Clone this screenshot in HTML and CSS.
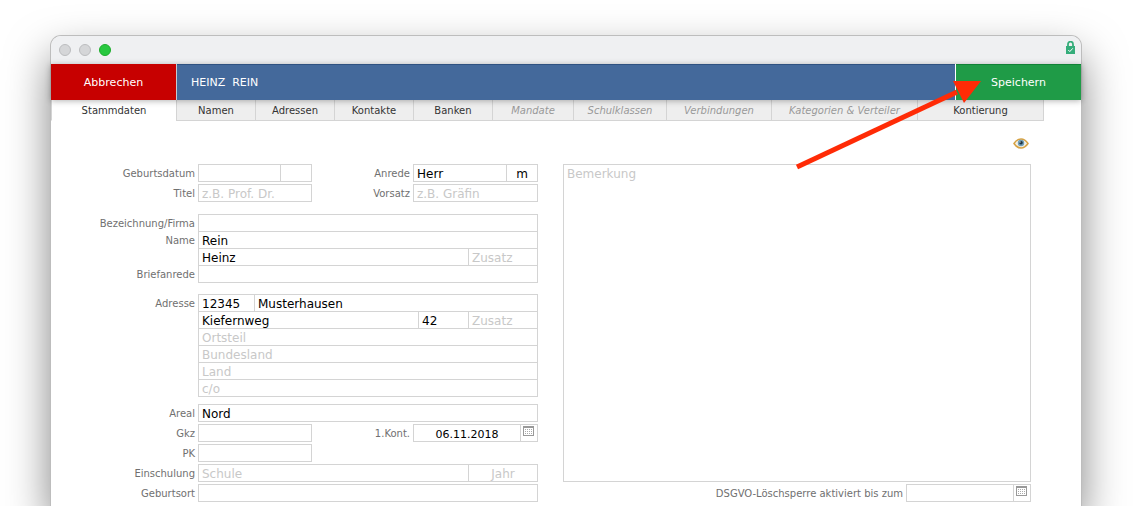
FILE: index.html
```html
<!DOCTYPE html>
<html lang="de">
<head>
<meta charset="utf-8">
<title>Heinz Rein</title>
<link rel="stylesheet" href="styles.css">
</head>
<body>
<svg class="defs" aria-hidden="true">
  <symbol id="calendar" viewBox="0 0 11 10">
    <path fill="#999" d="M0 0h11v2H0zM0 2h1v8H0zM10 2h1v8h-1zM1 9h9v1H1z"/>
    <path fill="#aaa" d="M2 3h1v1H2zM4 3h1v1H4zM6 3h1v1H6zM8 3h1v1H8zM2 5h1v1H2zM4 5h1v1H4zM6 5h1v1H6zM8 5h1v1H8zM2 7h1v1H2zM4 7h1v1H4zM6 7h1v1H6zM8 7h1v1H8z"/>
  </symbol>
</svg>
<main class="window">
  <header class="titlebar">
    <span class="light"></span><span class="light"></span><span class="light light-on"></span>
    <svg class="lock" viewBox="0 0 9 13" width="9" height="13" aria-hidden="true">
      <path d="M2 6V3.2a2.5 2.5 0 0 1 5 0V6" fill="none" stroke="#35ad7b" stroke-width="1.8"/>
      <rect y="5" width="9" height="8" fill="#35ad7b"/>
      <path d="M2.300 9l1.500 1.600L6.800 7.300" fill="none" stroke="#fff" stroke-width="1"/>
    </svg>
  </header>
  <div class="toolbar">
    <button class="action cancel" type="button">Abbrechen</button>
    <h1 class="person">HEINZ&nbsp; REIN</h1>
    <button class="action save" type="button">Speichern</button>
  </div>
  <nav class="tabs">
    <button class="tab active" type="button">Stammdaten</button>
    <button class="tab" type="button">Namen</button>
    <button class="tab" type="button">Adressen</button>
    <button class="tab" type="button">Kontakte</button>
    <button class="tab" type="button">Banken</button>
    <button class="tab" type="button" disabled>Mandate</button>
    <button class="tab" type="button" disabled>Schulklassen</button>
    <button class="tab" type="button" disabled>Verbindungen</button>
    <button class="tab" type="button" disabled>Kategorien &amp; Verteiler</button>
    <button class="tab" type="button">Kontierung</button>
  </nav>
  <div class="viewbar">
    <button class="eye" type="button" aria-label="Ansicht">
      <svg viewBox="0 0 16 11" width="16" height="11" aria-hidden="true">
        <path d="M1 5.500C3.500 1.800 5.800 1 8 1s4.500.8 7 4.500C12.500 9.200 10.200 10 8 10S3.500 9.200 1 5.500z" fill="#f1efe6" stroke="#d6a243" stroke-width="1.500"/>
        <circle cx="8" cy="5" r="3.200" fill="#6d9db8"/>
        <circle cx="8" cy="4.800" r="1.800" fill="#1d3340"/>
        <circle cx="7" cy="4" r=".7" fill="#d8e8ee"/>
      </svg>
    </button>
  </div>
  <form class="form">
    <div class="person-data">
      <section class="group spaced">
        <div class="row">
          <label for="geb">Geburtsdatum</label>
          <div class="box short"><input id="geb"><input class="w-age" aria-label="Alter"></div>
          <label class="second" for="anrede">Anrede</label>
          <div class="box medium"><input id="anrede" value="Herr"><input class="w-age center" value="m" aria-label="Geschlecht"></div>
        </div>
        <div class="row">
          <label for="titel">Titel</label>
          <div class="box short"><input id="titel" placeholder="z.B. Prof. Dr."></div>
          <label class="second" for="vorsatz">Vorsatz</label>
          <div class="box medium"><input id="vorsatz" placeholder="z.B. Gräfin"></div>
        </div>
      </section>
      <section class="group stacked names">
        <div class="row"><label for="firma">Bezeichnung/Firma</label><div class="box"><input id="firma"></div></div>
        <div class="row"><label for="name">Name</label><div class="box"><input id="name" value="Rein"></div></div>
        <div class="row"><span></span><div class="box"><input value="Heinz" aria-label="Vorname"><input class="w-extra" placeholder="Zusatz" aria-label="Namenszusatz"></div></div>
        <div class="row"><label for="brief">Briefanrede</label><div class="box"><input id="brief"></div></div>
      </section>
      <section class="group stacked address">
        <div class="row"><label for="plz">Adresse</label><div class="box"><input id="plz" class="w-zip" value="12345"><input value="Musterhausen" aria-label="Ort"></div></div>
        <div class="row"><span></span><div class="box"><input value="Kiefernweg" aria-label="Straße"><input class="w-number" value="42" aria-label="Hausnummer"><input class="w-extra" placeholder="Zusatz" aria-label="Adresszusatz"></div></div>
        <div class="row"><span></span><div class="box"><input placeholder="Ortsteil" aria-label="Ortsteil"></div></div>
        <div class="row"><span></span><div class="box"><input placeholder="Bundesland" aria-label="Bundesland"></div></div>
        <div class="row"><span></span><div class="box"><input placeholder="Land" aria-label="Land"></div></div>
        <div class="row"><span></span><div class="box"><input placeholder="c/o" aria-label="c/o"></div></div>
      </section>
      <section class="group spaced">
        <div class="row"><label for="areal">Areal</label><div class="box"><input id="areal" value="Nord"></div></div>
        <div class="row">
          <label for="gkz">Gkz</label>
          <div class="box short"><input id="gkz"></div>
          <label class="second" for="kont">1.Kont.</label>
          <div class="box medium"><input id="kont" class="center date" value="06.11.2018"><button class="pick" type="button" aria-label="Kalender"><svg width="11" height="10"><use href="#calendar"/></svg></button></div>
        </div>
        <div class="row"><label for="pk">PK</label><div class="box short"><input id="pk"></div></div>
        <div class="row"><label for="schule">Einschulung</label><div class="box"><input id="schule" placeholder="Schule"><input class="w-extra center" placeholder="Jahr" aria-label="Jahr"></div></div>
        <div class="row"><label for="ort">Geburtsort</label><div class="box"><input id="ort"></div></div>
      </section>
    </div>
    <div class="notes">
      <textarea placeholder="Bemerkung" aria-label="Bemerkung"></textarea>
      <div class="row lockdate">
        <label for="sperre">DSGVO-Löschsperre aktiviert bis zum</label>
        <div class="box medium"><input id="sperre" class="date"><button class="pick" type="button" aria-label="Kalender"><svg width="11" height="10"><use href="#calendar"/></svg></button></div>
      </div>
    </div>
  </form>
  <svg class="arrow" viewBox="0 0 188 92" width="188" height="92" aria-hidden="true">
    <path d="M3 87L163 12" stroke="#ff2b06" stroke-width="5"/>
    <path d="M187 1L159 1L170 23z" fill="#ff2b06"/>
  </svg>
</main>
</body>
</html>
```

FILE: styles.css
```css
* { box-sizing: border-box; }

body {
  display: flex;
  margin: 0;
  height: 100vh;
  padding: 36px 56px 0 51px;
  overflow: hidden;
  background: #fff;
  font: 10px/14px "DejaVu Sans", Verdana, sans-serif;
  color: #333;
}

button, input, textarea {
  margin: 0;
  border: 0;
  border-radius: 0;
  font: inherit;
  color: inherit;
}

.defs { position: absolute; width: 0; height: 0; }

.window {
  position: relative;
  flex: 1;
  border-radius: 10px 10px 0 0;
  background: #fff;
  box-shadow: 0 0 0 1px #bdbdbd, 0 20px 44px rgba(0, 0, 0, .5);
}

.titlebar {
  display: flex;
  align-items: center;
  gap: 8px;
  height: 28px;
  padding: 0 6px 0 8px;
  border-radius: 10px 10px 0 0;
  background: #eff0f2;
}
.light {
  width: 12px;
  height: 12px;
  border: 1px solid #bcbdbf;
  border-radius: 50%;
  background: #d5d6d8;
}
.light-on { border-color: #1dad2c; background: #28c840; }
.lock { margin: 0 0 6px auto; }

.toolbar {
  position: relative;
  display: flex;
  height: 36px;
  background: #44699b;
  color: #fff;
  font-size: 11px;
  box-shadow: inset 0 1px rgba(0, 30, 70, .3), 0 1px 6px rgba(0, 0, 0, .3);
}
.action { width: 125px; padding: 2px 0 0; }
.cancel { background: #c70000; box-shadow: 1px 0 #c5c9d0; }
.save { margin-left: auto; background: #1f9b47; box-shadow: -1px 0 #fff, inset 0 1px #118237; }
.person { margin: 0 0 0 15px; font: inherit; line-height: 38px; }

.tabs {
  display: grid;
  grid-template-columns: 125fr 79fr 79fr 79fr 79fr 81fr 93fr 105fr 146fr 127fr;
  height: 21px;
  margin-right: 37px;
}
.tab {
  padding: 2px 0 0;
  border: solid #d4d4d4;
  border-width: 0 0 1px 1px;
  background: #eee;
  white-space: nowrap;
}
.tab:last-child { border-right-width: 1px; }
.tab:disabled { color: #999; font-style: italic; }
.active { border-bottom-color: #fff; background: #fff; }

.viewbar {
  display: flex;
  justify-content: flex-end;
  height: 43px;
  padding: 17px 52px 0 0;
}
.eye { display: flex; align-self: flex-start; padding: 0; background: none; }

.form { display: flex; gap: 25px; padding-right: 50px; }
.person-data { width: 487px; }
.notes { display: flex; flex: 1; flex-direction: column; gap: 2px; }

.group { display: flex; flex-direction: column; }
.spaced { gap: 2px; }
.stacked .row + .row { margin-top: -1px; }
.names { margin: 12px 0 11px; }
.address { margin-bottom: 7px; }

.row { display: flex; gap: 3px; height: 18px; }
.row > :first-child { flex: none; width: 144px; }
label { color: #707070; line-height: 20px; text-align: right; white-space: nowrap; }
.second { flex: 1; }

.box { display: flex; flex: 1; min-width: 0; height: 18px; border: 1px solid #d4d4d4; }
.short { flex: none; width: 114px; }
.medium { flex: none; width: 125px; }

input {
  flex: 1;
  min-width: 0;
  height: 16px;
  padding: 2px 3px 0;
  background: none;
  color: #000;
  font-size: 12px;
}
.date { font-size: 11px; }
.box > * + * { border-left: 1px solid #d4d4d4; }
::placeholder { color: #c8c8c8; opacity: 1; }
.center { text-align: center; }
.w-age { flex: 0 0 31px; }
.w-extra { flex: 0 0 69px; }
.w-number { flex: 0 0 50px; }
.w-zip { flex: 0 0 55px; }
.pick { display: flex; flex: 0 0 17px; padding: 1px 2px; background: #fff; }

textarea {
  flex: 1;
  padding: 2px 3px;
  border: 1px solid #d4d4d4;
  background: none;
  color: #000;
  font-size: 12px;
  resize: none;
}
.lockdate { justify-content: flex-end; }
.lockdate > :first-child { width: auto; }

.arrow { position: absolute; top: 44px; right: 99px; pointer-events: none; }
```
